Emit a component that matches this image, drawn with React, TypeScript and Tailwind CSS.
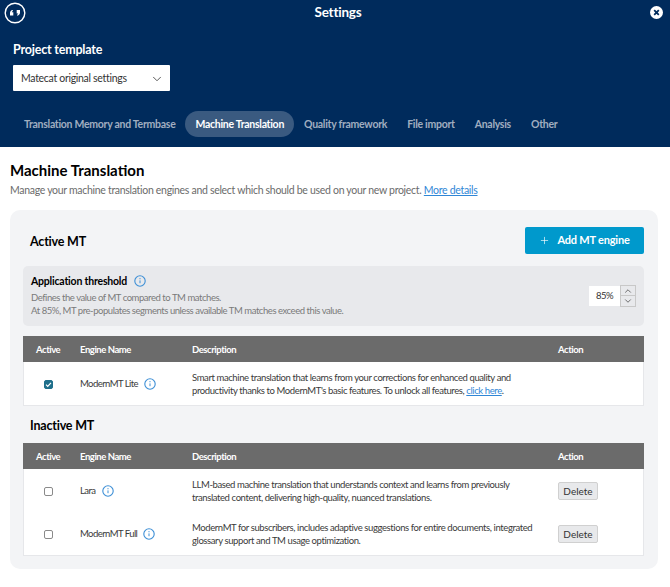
import { ChevronDown, ChevronUp, Plus } from 'lucide-react'

const fontStack = "font-['Lato','Liberation_Sans',sans-serif]"

function InfoIcon() {
  return (
    <svg width="12" height="12" viewBox="0 0 12 12" fill="none" className="shrink-0">
      <circle cx="6" cy="6" r="5.2" stroke="#3d8fd6" strokeWidth="1.1" />
      <path d="M6 5.4v2.8" stroke="#3d8fd6" strokeWidth="1" />
      <circle cx="6" cy="3.7" r="0.6" fill="#3d8fd6" />
    </svg>
  )
}

function Logo() {
  return (
    <svg width="22" height="22" viewBox="0 0 22 22" fill="none">
      <circle cx="11" cy="11" r="9.8" stroke="white" strokeWidth="1.4" />
      <path d="M6 13.6v-2.6c0-1.7 1-2.8 2.7-3.1l.3 1c-.8.2-1.2.7-1.2 1.3h1.5v3.4z" fill="white" />
      <path d="M16 8v2.6c0 1.7-1 2.8-2.7 3.1l-.3-1c.8-.2 1.2-.7 1.2-1.3h-1.5V8z" fill="white" />
    </svg>
  )
}

function CloseIcon() {
  return (
    <svg width="13" height="13" viewBox="0 0 13 13">
      <circle cx="6.5" cy="6.5" r="6.5" fill="white" />
      <path d="M4.2 4.2l4.6 4.6M8.8 4.2l-4.6 4.6" stroke="#002b5c" strokeWidth="1.8" />
    </svg>
  )
}

function Checkbox({ checked }: { checked?: boolean }) {
  if (checked) {
    return (
      <span className="box-content flex h-[7px] w-[7px] items-center justify-center rounded-[2px] border border-[#1f6f8b] bg-[#1f6f8b]">
        <svg width="7" height="7" viewBox="0 0 8 8" fill="none" className="shrink-0">
          <path d="M1.2 4.2l1.9 1.9 3.7-4" stroke="white" strokeWidth="1.4" />
        </svg>
      </span>
    )
  }
  return <span className="box-content block h-[7px] w-[7px] rounded-[2px] border border-[#8a8a8a] bg-white" />
}

function HeadRow() {
  return (
    <div className="-mx-px flex h-[26px] items-center bg-[#6b6b6b] px-px pt-[2px] text-[9.5px] font-bold tracking-[-0.45px] text-white">
      <span className="w-[56px] pl-[12px]">Active</span>
      <span className="w-[112px]">Engine Name</span>
      <span className="flex-1">Description</span>
      <span className="w-[85px]">Action</span>
    </div>
  )
}

type RowProps = {
  name: string
  checked?: boolean
  del?: boolean
  children: React.ReactNode
}

function Row({ name, checked, del, children }: RowProps) {
  return (
    <div className="flex h-[43px] items-center pt-px text-[9.5px] text-[#3a3a3a]">
      <span className="flex w-[56px] pl-[20px]"><Checkbox checked={checked} /></span>
      <span className="flex w-[112px] items-center gap-[6px] tracking-[-0.55px]">
        {name}
        <InfoIcon />
      </span>
      <div className="flex-1 leading-[13.3px] tracking-[-0.4px]">{children}</div>
      <span className="w-[85px]">
        {del && (
          <button className="h-[18px] w-[40px] rounded-[2px] border border-[#d0d0d0] bg-[#e8e9eb] text-[10px] text-[#333]">
            Delete
          </button>
        )}
      </span>
    </div>
  )
}

const tabs = ['Translation Memory and Termbase', 'Machine Translation', 'Quality framework', 'File import', 'Analysis', 'Other']

export default function App() {
  return (
    <div className={`${fontStack} flex h-[587px] w-[670px] flex-col overflow-hidden bg-white`}>
      {/* Header */}
      <header className="h-[147px] shrink-0 bg-[#002b5c] text-white">
        <div className="flex h-[25px] items-center justify-between pl-[4px] pr-[7px]">
          <Logo />
          <h1 className="text-[13.5px] font-bold tracking-[-0.2px]">Settings</h1>
          <CloseIcon />
        </div>
        <div className="mt-[17px] pl-[13px] text-[12.5px] font-bold leading-4 tracking-[-0.2px]">Project template</div>
        <div className="ml-[13px] mt-[7px] flex h-[26px] w-[157px] items-center justify-between rounded-[1px] bg-white pl-[8px] pr-[6px] pt-px text-[10.5px] tracking-[-0.3px] text-[#333]">
          Matecat original settings
          <ChevronDown size={14} strokeWidth={1.5} className="text-[#444]" />
        </div>
        <nav className="mt-[20px] flex items-center pl-[14px] text-[10.5px] font-bold tracking-[-0.28px]">
          {tabs.map((tab) => (
            <span
              key={tab}
              className={tab === 'Machine Translation'
                ? 'flex h-[26px] items-center rounded-full bg-[#3a5a80] px-[10px] pt-[2px] text-white'
                : 'flex h-[26px] items-center px-[10px] pt-[2px] text-[#a0aec0]'}
            >
              {tab}
            </span>
          ))}
        </nav>
      </header>

      {/* Content */}
      <main className="pl-[10px] pr-[12px]">
        <h2 className="mt-[14px] text-[15px] font-bold leading-[18px] text-black">Machine Translation</h2>
        <p className="mt-[4px] text-[10.5px] leading-[14px] tracking-[-0.3px] text-[#6b6b6b]">
          Manage your machine translation engines and select which should be used on your new project.{' '}
          <a className="text-[#2f86d6] underline">More details</a>
        </p>

        <section className="mt-[13px] rounded-[10px] bg-[#f3f4f6] pb-[13px] pl-[13px] pr-[14px]">
          <div className="flex h-[56px] items-center justify-between pt-[5px]">
            <h3 className="pl-[7px] pt-[3px] text-[12.5px] font-bold tracking-[-0.2px] text-black">Active MT</h3>
            <button className="flex h-[27px] w-[119px] items-center justify-center gap-[7px] rounded-[2px] bg-[#0099cc] text-[11px] font-bold tracking-[-0.2px] text-white">
              <Plus size={11} strokeWidth={1.4} />
              Add MT engine
            </button>
          </div>

          <div className="flex h-[60px] items-center justify-between rounded-[5px] bg-[#e8e9ec] px-[8px]">
            <div className="-mt-[1px]">
              <div className="flex items-center gap-[7px] text-[10.5px] font-bold leading-[14px] tracking-[-0.2px] text-black">
                Application threshold
                <InfoIcon />
              </div>
              <p className="mt-[3px] text-[9.5px] leading-[13px] tracking-[-0.45px] text-[#7a7a7a]">
                Defines the value of MT compared to TM matches.
                <br />
                At 85%, MT pre-populates segments unless available TM matches exceed this value.
              </p>
            </div>
            <div className="flex items-center">
              <span className="flex h-[20px] w-[31px] items-center justify-center bg-white text-[9.5px] tracking-[-0.5px] text-[#333]">85%</span>
              <div className="flex w-[16px] flex-col border border-[#c8c8c8]">
                <span className="flex h-[10px] items-center justify-center border-b border-[#c8c8c8]"><ChevronUp size={10} className="text-[#555]" /></span>
                <span className="flex h-[10px] items-center justify-center"><ChevronDown size={10} className="text-[#555]" /></span>
              </div>
            </div>
          </div>

          <div className="mt-[10px] border-x border-b border-[#e6e7ea] bg-white">
            <HeadRow />
            <Row name="ModernMT Lite" checked>
              Smart machine translation that learns from your corrections for enhanced quality and
              <br />
              productivity thanks to ModernMT's basic features. To unlock all features,{' '}
              <a className="text-[#2f86d6] underline">click here</a>.
            </Row>
          </div>

          <h3 className="mb-[9px] mt-[12px] pl-[7px] text-[12.5px] font-bold leading-[16px] tracking-[-0.2px] text-black">Inactive MT</h3>

          <div className="border-x border-b border-[#e6e7ea] bg-white">
            <HeadRow />
            <Row name="Lara" del>
              LLM-based machine translation that understands context and learns from previously
              <br />
              translated content, delivering high-quality, nuanced translations.
            </Row>
            <Row name="ModernMT Full" del>
              ModernMT for subscribers, includes adaptive suggestions for entire documents, integrated
              <br />
              glossary support and TM usage optimization.
            </Row>
          </div>
        </section>
      </main>
    </div>
  )
}
